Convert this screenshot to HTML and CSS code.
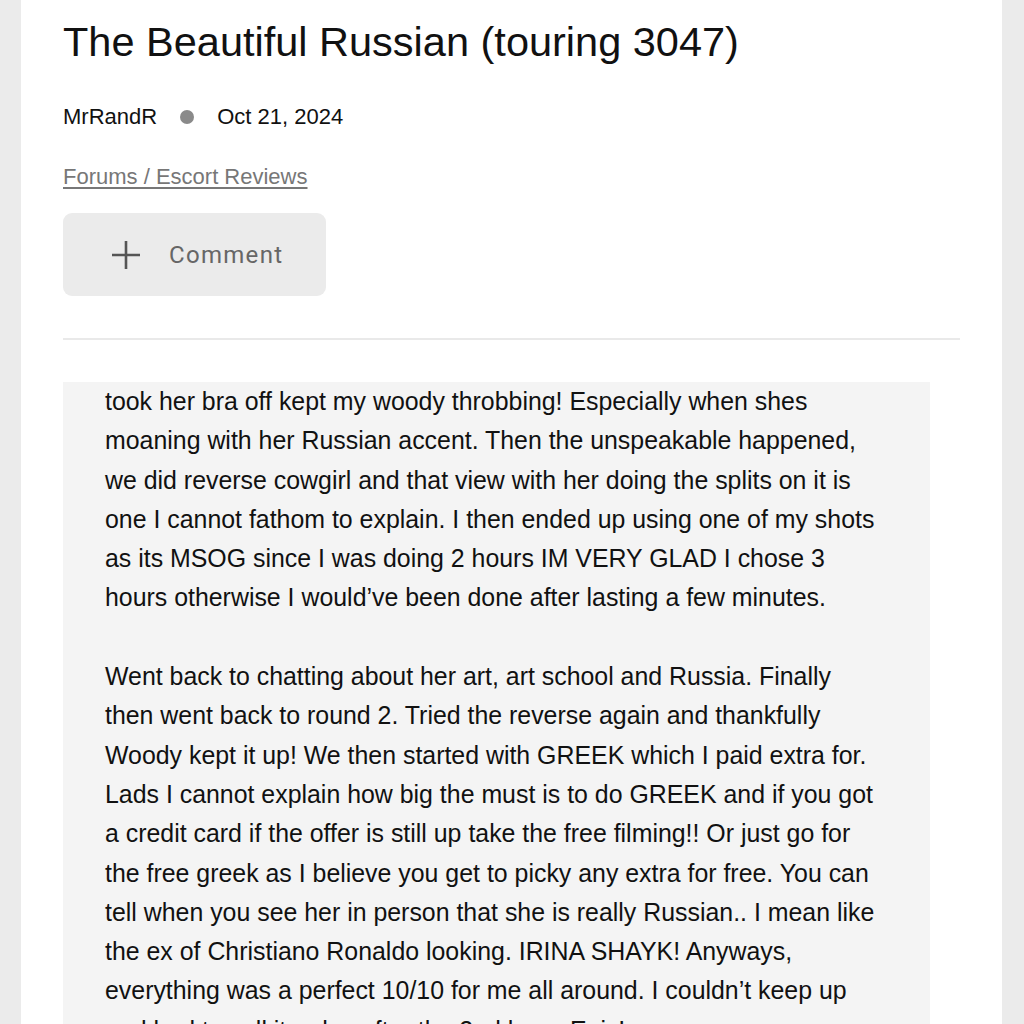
FILE: index.html
```html
<!DOCTYPE html>
<html lang="en">
<head>
    <meta charset="UTF-8">
    <meta name="viewport" content="width=device-width, initial-scale=1.0">
    <title>The Beautiful Russian (touring 3047)</title>
    <link rel="stylesheet" href="styles.css">
</head>
<body>
    <div class="page">
        <h1 class="thread-title">The Beautiful Russian (touring 3047)</h1>

        <div class="meta">
            <span class="author">MrRandR</span>
            <span class="dot"></span>
            <span class="date">Oct 21, 2024</span>
        </div>

        <a class="crumbs" href="#">Forums / Escort Reviews</a>

        <button class="comment-btn">
            <svg class="plus" width="30" height="30" viewBox="0 0 30 30">
                <path d="M15 1v28M1 15h28" stroke="#555" stroke-width="2.6" fill="none"/>
            </svg>
            <span>Comment</span>
        </button>

        <hr class="divider">

        <div class="post-body">
            <p>took her bra off kept my woody throbbing! Especially when shes moaning with her Russian accent. Then the unspeakable happened, we did reverse cowgirl and that view with her doing the splits on it is one I cannot fathom to explain. I then ended up using one of my shots as its MSOG since I was doing 2 hours IM VERY GLAD I chose 3 hours otherwise I would’ve been done after lasting a few minutes.</p>
            <p>Went back to chatting about her art, art school and Russia. Finally then went back to round 2. Tried the reverse again and thankfully Woody kept it up! We then started with GREEK which I paid extra for. Lads I cannot explain how big the must is to do GREEK and if you got a credit card if the offer is still up take the free filming!! Or just go for the free greek as I believe you get to picky any extra for free. You can tell when you see her in person that she is really Russian.. I mean like the ex of Christiano Ronaldo looking. IRINA SHAYK! Anyways, everything was a perfect 10/10 for me all around. I couldn’t keep up and had to call it a day after the 2nd hour. Epic!</p>
        </div>
    </div>
</body>
</html>
```

FILE: styles.css
```css
body {
    margin: 0;
    height: 1024px;
    overflow: hidden;
    background-color: #ebebeb;
    font-family: "Liberation Sans", Arial, sans-serif;
    color: #111;
}

.page {
    margin-left: 21px;
    width: 981px;
    min-height: 1024px;
    box-sizing: border-box;
    padding: 18px 42px 0;
    background: #fff;
}

.thread-title {
    margin: 0;
    font-size: 41.5px;
    line-height: 48px;
    font-weight: normal;
    color: #111;
}

.meta {
    display: flex;
    align-items: center;
    gap: 23px;
    margin-top: 38px;
    font-size: 22px;
    line-height: 26px;
}

.dot {
    width: 14px;
    height: 14px;
    border-radius: 50%;
    background: #8a8a8a;
}

.crumbs {
    display: inline-block;
    margin-top: 34px;
    font-size: 22px;
    line-height: 26px;
    color: #777;
    text-decoration: underline;
    text-underline-offset: 3px;
}

.comment-btn {
    display: flex;
    align-items: center;
    gap: 28px;
    margin-top: 23px;
    width: 263px;
    height: 83px;
    padding: 0 0 0 48px;
    border: none;
    border-radius: 9px;
    background: #ebebeb;
    font-family: Roboto, "Liberation Sans", sans-serif;
    font-size: 24px;
    letter-spacing: 1.3px;
    color: #666;
}

.divider {
    margin: 42px 0 0;
    border: none;
    border-top: 2px solid #e9e9e9;
}

.post-body {
    width: 867px;
    box-sizing: border-box;
    margin-top: 42px;
    padding: 0 50px 0 42px;
    background: #f4f4f4;
    font-size: 24.9px;
    line-height: 39.3px;
}

.post-body p {
    margin: 0 0 39.3px;
}
```
